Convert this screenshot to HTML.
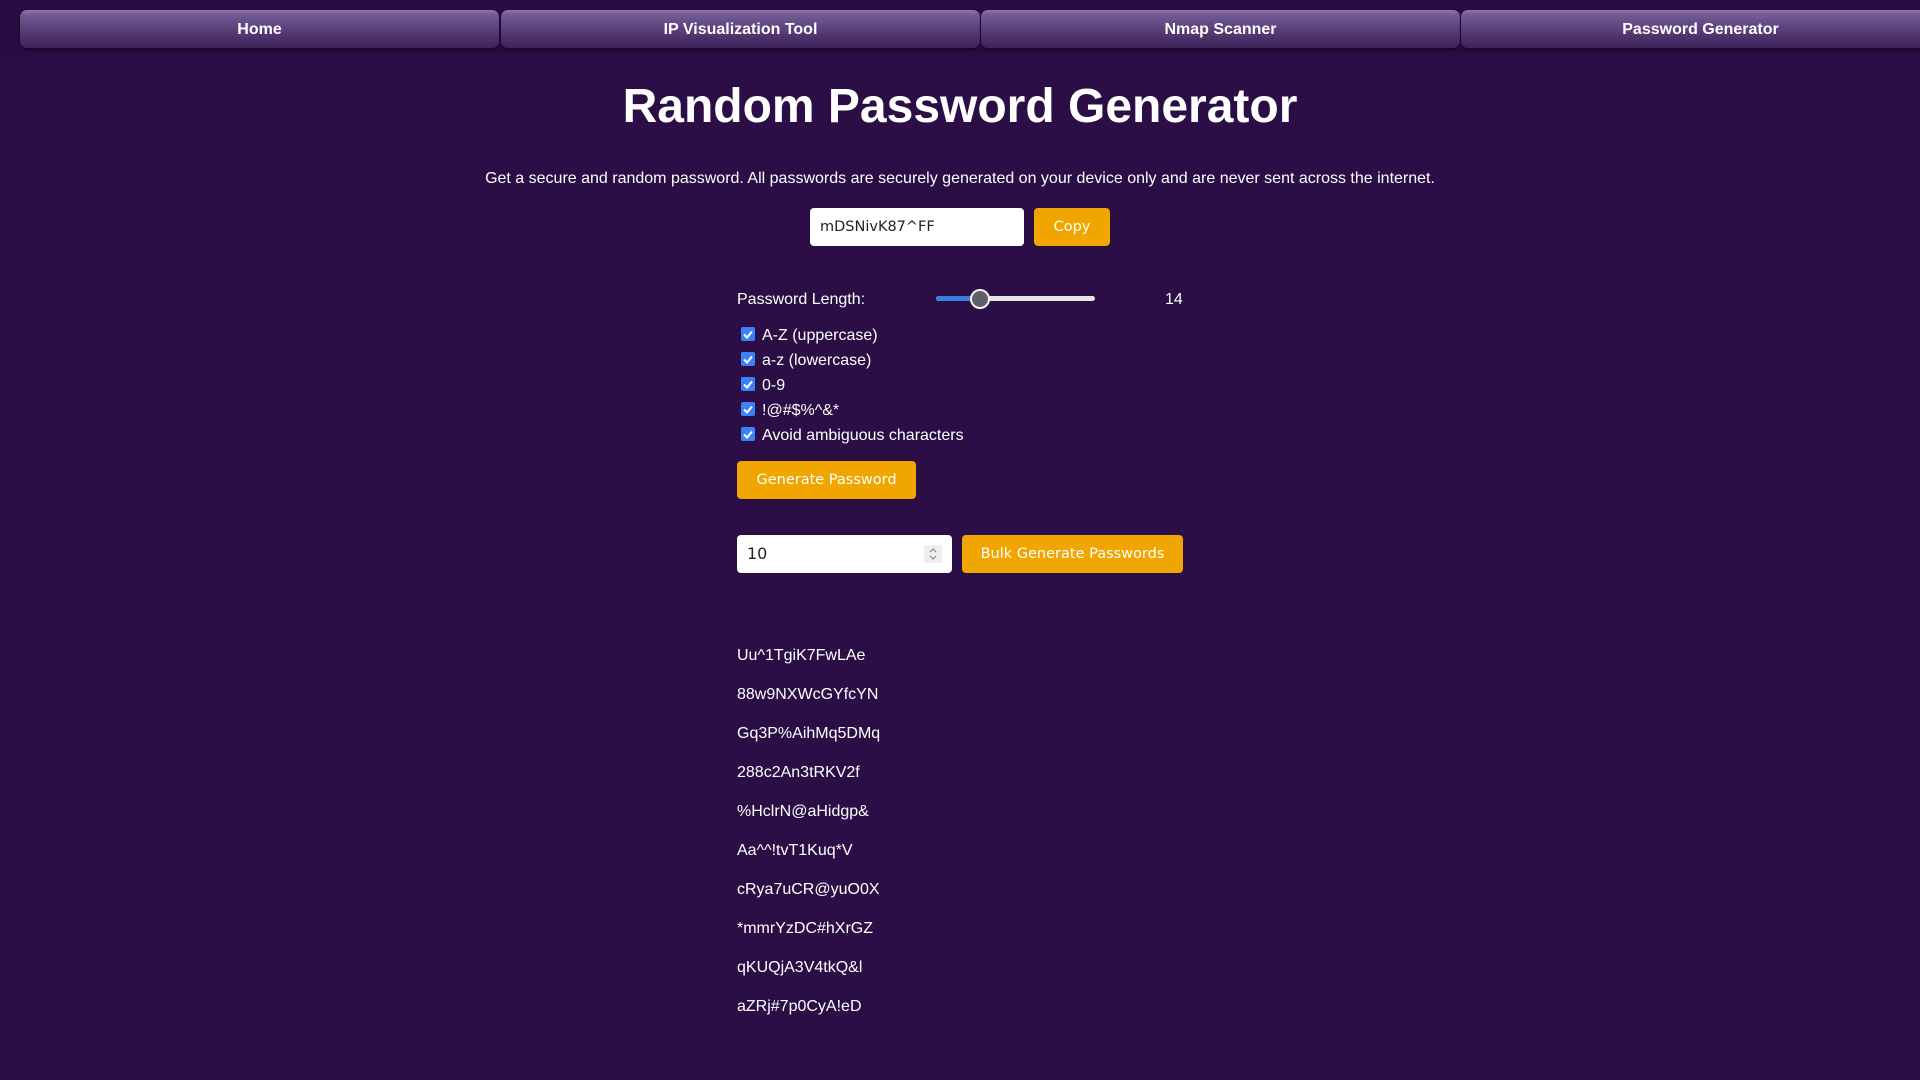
<!DOCTYPE html>
<html><head><meta charset="utf-8"><style>
*{box-sizing:border-box;margin:0;padding:0}
body{width:1920px;height:1080px;overflow:hidden;background:#2b0e45;font-family:"Liberation Sans",Arial,sans-serif;color:#fff;position:relative}
.navbg{position:absolute;left:0;top:0;width:1920px;height:58px;background:#290d42}
.nb{position:absolute;top:10px;height:38px;width:479px;border-radius:7px;background:linear-gradient(#8f79ab 0%,#735b96 12%,#4f336c 70%,#3d2257 100%);box-shadow:0 2px 3px rgba(0,0,0,.4);font-weight:bold;font-size:16px;line-height:40px;text-align:center;color:#fff}
h1{position:absolute;top:78px;left:0;width:1920px;text-align:center;font-size:48px;font-weight:bold;line-height:58px}
.desc{position:absolute;top:170px;left:0;width:1920px;text-align:center;font-size:16px}
.ab{position:absolute}
.inp{background:#fff;border-radius:4px;color:#222;font-family:"DejaVu Sans",sans-serif;font-size:14.5px;padding-left:10px;line-height:38px;height:38px}
.btn{background:#f0a500;border-radius:4px;color:#fff;font-family:"DejaVu Sans",sans-serif;font-size:14.5px;text-align:center;line-height:38px;height:38px}
.lbl{font-size:16px}
.cb{position:absolute;left:741px;width:14px;height:14px;background:#3b82f6;border-radius:2px}
.cb svg{position:absolute;left:0;top:0}
.pw{position:absolute;left:737px;font-size:16px}
</style></head><body>
<div class="navbg"></div>
<div class="nb" style="left:20px">Home</div>
<div class="nb" style="left:501px">IP Visualization Tool</div>
<div class="nb" style="left:981px">Nmap Scanner</div>
<div class="nb" style="left:1461px">Password Generator</div>
<h1>Random Password Generator</h1>
<div class="desc">Get a secure and random password. All passwords are securely generated on your device only and are never sent across the internet.</div>
<div class="ab inp" style="left:810px;top:208px;width:214px">mDSNivK87^FF</div>
<div class="ab btn" style="left:1034px;top:208px;width:76px">Copy</div>
<div class="ab lbl" style="left:737px;top:291px">Password Length:</div>
<div class="ab" style="left:936px;top:296px;width:159px;height:5px;border-radius:3px;background:#e6e6e6"></div>
<div class="ab" style="left:936px;top:296px;width:44px;height:5px;border-radius:3px;background:#3a7fe0"></div>
<div class="ab" style="left:970px;top:289px;width:20px;height:20px;border-radius:50%;background:#5f5f6a;border:2px solid #f2f2f2"></div>
<div class="ab lbl" style="left:1165px;top:291px">14</div>
<div class="cb" style="top:327px"><svg width="14" height="14"><path d="M3 7.5l3 3 5-6" stroke="#fff" stroke-width="2" fill="none"/></svg></div>
<div class="ab lbl" style="left:762px;top:327px">A-Z (uppercase)</div>
<div class="cb" style="top:352px"><svg width="14" height="14"><path d="M3 7.5l3 3 5-6" stroke="#fff" stroke-width="2" fill="none"/></svg></div>
<div class="ab lbl" style="left:762px;top:352px">a-z (lowercase)</div>
<div class="cb" style="top:377px"><svg width="14" height="14"><path d="M3 7.5l3 3 5-6" stroke="#fff" stroke-width="2" fill="none"/></svg></div>
<div class="ab lbl" style="left:762px;top:377px">0-9</div>
<div class="cb" style="top:402px"><svg width="14" height="14"><path d="M3 7.5l3 3 5-6" stroke="#fff" stroke-width="2" fill="none"/></svg></div>
<div class="ab lbl" style="left:762px;top:402px">!@#$%^&amp;*</div>
<div class="cb" style="top:427px"><svg width="14" height="14"><path d="M3 7.5l3 3 5-6" stroke="#fff" stroke-width="2" fill="none"/></svg></div>
<div class="ab lbl" style="left:762px;top:427px">Avoid ambiguous characters</div>
<div class="ab btn" style="left:737px;top:461px;width:179px">Generate Password</div>
<div class="ab inp" style="left:737px;top:535px;width:215px;font-size:16px">10</div>
<div class="ab" style="left:924px;top:545px;width:18px;height:18px;background:#eee;border-radius:2px"><svg width="18" height="18"><path d="M6 7l3-3 3 3M6 11l3 3 3-3" stroke="#888" stroke-width="1.2" fill="none"/></svg></div>
<div class="ab btn" style="left:962px;top:535px;width:221px">Bulk Generate Passwords</div>
<div class="pw" style="top:647px">Uu^1TgiK7FwLAe</div>
<div class="pw" style="top:686px">88w9NXWcGYfcYN</div>
<div class="pw" style="top:725px">Gq3P%AihMq5DMq</div>
<div class="pw" style="top:764px">288c2An3tRKV2f</div>
<div class="pw" style="top:803px">%HclrN@aHidgp&amp;</div>
<div class="pw" style="top:842px">Aa^^!tvT1Kuq*V</div>
<div class="pw" style="top:881px">cRya7uCR@yuO0X</div>
<div class="pw" style="top:920px">*mmrYzDC#hXrGZ</div>
<div class="pw" style="top:959px">qKUQjA3V4tkQ&amp;l</div>
<div class="pw" style="top:998px">aZRj#7p0CyA!eD</div>
</body></html>
